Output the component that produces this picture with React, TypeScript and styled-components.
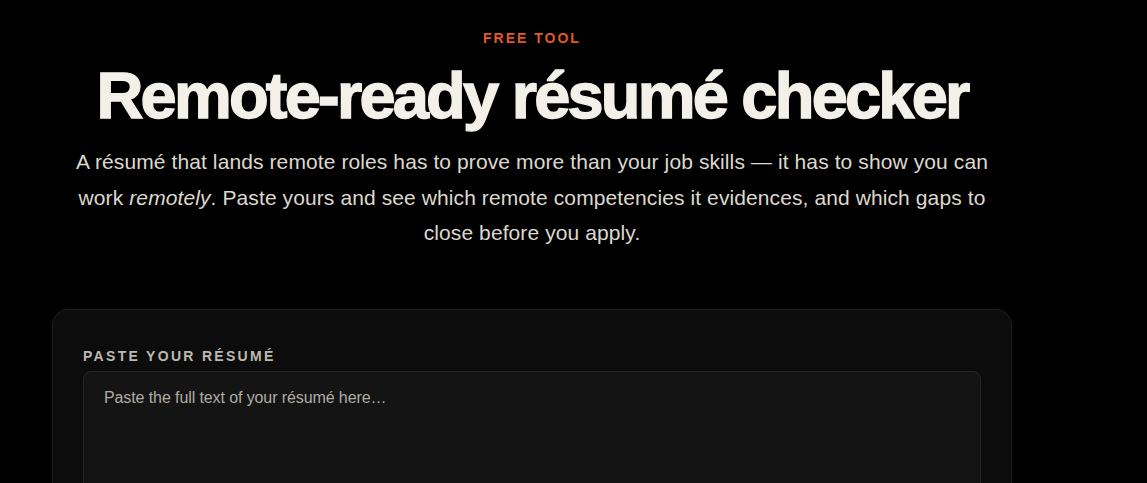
import styled, { createGlobalStyle } from "styled-components";

const GlobalStyle = createGlobalStyle`
  html, body {
    margin: 0;
    padding: 0;
    background: #000;
  }
  body {
    font-family: "Liberation Sans", Arial, sans-serif;
    color: #f2f0e8;
  }
`;

const App = () => {
  return (
    <>
      <GlobalStyle />
      <Page>
        <Hero>
          <Eyebrow>Free tool</Eyebrow>
          <Title>Remote-ready résumé checker</Title>
          <Lead>
            A résumé that lands remote roles has to prove more than your job skills — it has to
            show you can work <em>remotely</em>. Paste yours and see which remote competencies it
            evidences, and which gaps to close before you apply.
          </Lead>
        </Hero>

        <Card>
          <FieldLabel htmlFor="resume">Paste your résumé</FieldLabel>
          <ResumeInput id="resume" placeholder="Paste the full text of your résumé here…" />
        </Card>
      </Page>
    </>
  );
};

const Page = styled.main`
  width: 960px;
  padding: 30px 0 0 52px;
`;

const Hero = styled.header`
  display: flex;
  flex-direction: column;
  align-items: center;
  text-align: center;
`;

const Eyebrow = styled.div`
  font-size: 14px;
  font-weight: 700;
  letter-spacing: 2px;
  text-transform: uppercase;
  color: #e0592a;
  line-height: 16px;
`;

const Title = styled.h1`
  margin: 14px 0 0;
  font-size: 65px;
  font-weight: 700;
  letter-spacing: -0.043em;
  line-height: 72px;
  color: #f2f0e8;
  -webkit-text-stroke: 1.4px #f2f0e8;
`;

const Lead = styled.p`
  margin: 12px 0 0;
  max-width: 922px;
  font-size: 21px;
  letter-spacing: 0.1px;
  line-height: 35.5px;
  color: #dcd8cf;

  em {
    font-style: italic;
  }
`;

const Card = styled.section`
  margin-top: 58px;
  padding: 38px 30px 40px;
  background: #0c0c0c;
  border: 1px solid #1f1f1f;
  border-radius: 16px;
  display: flex;
  flex-direction: column;
  gap: 7px;
`;

const FieldLabel = styled.label`
  font-size: 14px;
  font-weight: 700;
  letter-spacing: 2.3px;
  text-transform: uppercase;
  color: #bdb9b0;
  line-height: 16px;
`;

const ResumeInput = styled.textarea`
  box-sizing: border-box;
  width: 100%;
  height: 260px;
  padding: 14px 20px;
  background: #141414;
  border: 1px solid #272727;
  border-radius: 8px;
  resize: vertical;
  font-family: "Liberation Sans", Arial, sans-serif;
  font-size: 16px;
  letter-spacing: -0.1px;
  line-height: 24px;
  color: #f2f0e8;
  outline: none;

  &::placeholder {
    color: #b0aca3;
  }
`;

export default App;
